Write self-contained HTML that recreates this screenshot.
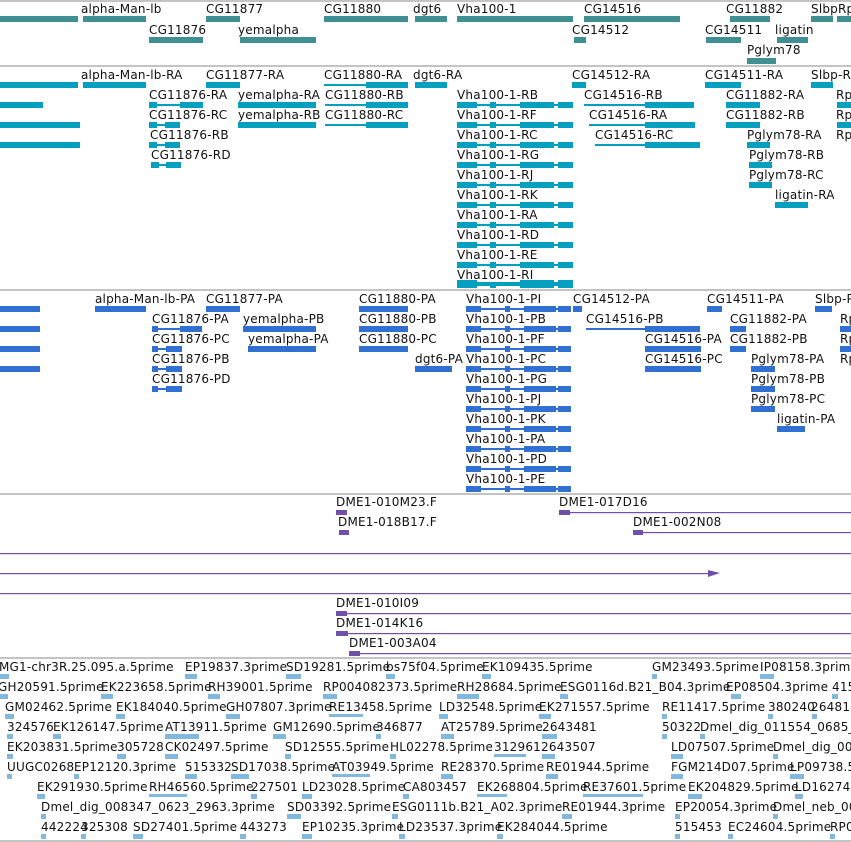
<!DOCTYPE html>
<html><head><meta charset="utf-8"><style>
html,body{margin:0;padding:0;background:#fff;width:851px;height:842px;overflow:hidden}
svg{display:block}
text{font-family:"DejaVu Sans","Liberation Sans",sans-serif;font-size:12px;fill:#111;letter-spacing:0.2px}
</style></head><body>
<svg width="851" height="842" xmlns="http://www.w3.org/2000/svg">
<g stroke="#c4c4c4" stroke-width="2">
<line x1="0" y1="1" x2="851" y2="1"/><line x1="0" y1="66" x2="851" y2="66"/>
<line x1="0" y1="290" x2="851" y2="290"/><line x1="0" y1="494" x2="851" y2="494"/>
<line x1="0" y1="658" x2="851" y2="658"/><line x1="0" y1="841" x2="851" y2="841"/>
</g>
<g fill="#3f8f93">
<rect x="0" y="16" width="78" height="6"/><rect x="83" y="16" width="63" height="6"/>
<rect x="206" y="16" width="34" height="6"/><rect x="324" y="16" width="84" height="6"/>
<rect x="415" y="16" width="32" height="6"/><rect x="457" y="16" width="116" height="6"/>
<rect x="584" y="16" width="96" height="6"/><rect x="730" y="16" width="40" height="6"/>
<rect x="811" y="16" width="22" height="6"/><rect x="837" y="16" width="14" height="6"/>
<rect x="149" y="37" width="54" height="6"/><rect x="240" y="37" width="76" height="6"/>
<rect x="574" y="37" width="12" height="6"/><rect x="706" y="37" width="35" height="6"/>
<rect x="777" y="37" width="31" height="6"/><rect x="747" y="58" width="29" height="6"/>
</g>
<text x="81" y="13">alpha-Man-lb</text><text x="206" y="13">CG11877</text><text x="324" y="13">CG11880</text>
<text x="413" y="13">dgt6</text><text x="457" y="13">Vha100-1</text><text x="584" y="13">CG14516</text>
<text x="726" y="13">CG11882</text><text x="811" y="13">SlbpRp</text>
<text x="149" y="34">CG11876</text><text x="238" y="34">yemalpha</text><text x="572" y="34">CG14512</text>
<text x="705" y="34">CG14511</text><text x="775" y="34">ligatin</text><text x="747" y="54">Pglym78</text>
<g fill="#05a0c0">
<rect x="0" y="82" width="78" height="6"/><rect x="83" y="82" width="63" height="6"/>
<rect x="206" y="82" width="34" height="6"/><rect x="324" y="84" width="84" height="2"/><rect x="366" y="82" width="42" height="6"/>
<rect x="415" y="82" width="32" height="6"/><rect x="572" y="82" width="14" height="6"/>
<rect x="705" y="82" width="36" height="6"/><rect x="811" y="82" width="22" height="6"/>
<rect x="0" y="102" width="43" height="6"/><rect x="149" y="104" width="54" height="2"/><rect x="149" y="102" width="8" height="6"/><rect x="180" y="102" width="23" height="6"/>
<rect x="238" y="102" width="78" height="6"/><rect x="325" y="104" width="83" height="2"/><rect x="366" y="102" width="42" height="6"/>
<rect x="584" y="104" width="110" height="2"/><rect x="645" y="102" width="49" height="6"/>
<rect x="726" y="102" width="34" height="6"/><rect x="837" y="102" width="14" height="6"/>
<rect x="0" y="122" width="80" height="6"/><rect x="149" y="124" width="31" height="2"/><rect x="149" y="122" width="8" height="6"/><rect x="165" y="122" width="15" height="6"/>
<rect x="238" y="122" width="78" height="6"/><rect x="325" y="124" width="83" height="2"/><rect x="366" y="122" width="42" height="6"/>
<rect x="589" y="124" width="106" height="2"/><rect x="645" y="122" width="50" height="6"/>
<rect x="726" y="122" width="34" height="6"/><rect x="837" y="122" width="14" height="6"/>
<rect x="0" y="142" width="80" height="6"/><rect x="149" y="144" width="31" height="2"/><rect x="149" y="142" width="8" height="6"/><rect x="165" y="142" width="15" height="6"/>
<rect x="595" y="144" width="105" height="2"/><rect x="645" y="142" width="55" height="6"/>
<rect x="747" y="142" width="23" height="6"/>
<rect x="151" y="164" width="30" height="2"/><rect x="151" y="162" width="8" height="6"/><rect x="166" y="162" width="15" height="6"/>
<rect x="749" y="162" width="23" height="6"/><rect x="749" y="182" width="23" height="6"/>
<rect x="775" y="202" width="33" height="6"/>
</g>
<g fill="#05a0c0" id="vt">
<rect x="457" y="104" width="116" height="2"/><rect x="457" y="102" width="20" height="6"/><rect x="490" y="102" width="6" height="6"/><rect x="520" y="102" width="34" height="6"/><rect x="558" y="102" width="15" height="6"/>
</g>
<use href="#vt" y="20"/><use href="#vt" y="40"/><use href="#vt" y="60"/><use href="#vt" y="80"/><use href="#vt" y="100"/><use href="#vt" y="120"/><use href="#vt" y="140"/><use href="#vt" y="160"/><use href="#vt" y="180"/>
<g fill="#05a0c0"><rect x="457" y="282" width="116" height="2"/><rect x="457" y="280" width="20" height="5"/><rect x="520" y="280" width="34" height="5"/><rect x="558" y="280" width="15" height="5"/></g>
<text x="81" y="79">alpha-Man-lb-RA</text><text x="206" y="79">CG11877-RA</text><text x="324" y="79">CG11880-RA</text><text x="413" y="79">dgt6-RA</text>
<text x="572" y="79">CG14512-RA</text><text x="705" y="79">CG14511-RA</text><text x="811" y="79">Slbp-RA</text>
<text x="149" y="99">CG11876-RA</text><text x="238" y="99">yemalpha-RA</text><text x="325" y="99">CG11880-RB</text><text x="457" y="99">Vha100-1-RB</text>
<text x="584" y="99">CG14516-RB</text><text x="726" y="99">CG11882-RA</text><text x="836" y="99">Rp</text>
<text x="149" y="119">CG11876-RC</text><text x="238" y="119">yemalpha-RB</text><text x="325" y="119">CG11880-RC</text><text x="457" y="119">Vha100-1-RF</text>
<text x="589" y="119">CG14516-RA</text><text x="726" y="119">CG11882-RB</text><text x="836" y="119">Rp</text>
<text x="150" y="139">CG11876-RB</text><text x="457" y="139">Vha100-1-RC</text><text x="595" y="139">CG14516-RC</text><text x="747" y="139">Pglym78-RA</text><text x="836" y="139">Rp</text>
<text x="151" y="159">CG11876-RD</text><text x="457" y="159">Vha100-1-RG</text><text x="749" y="159">Pglym78-RB</text>
<text x="457" y="179">Vha100-1-RJ</text><text x="749" y="179">Pglym78-RC</text>
<text x="457" y="199">Vha100-1-RK</text><text x="775" y="199">ligatin-RA</text>
<text x="457" y="219">Vha100-1-RA</text><text x="457" y="239">Vha100-1-RD</text><text x="457" y="259">Vha100-1-RE</text><text x="457" y="279">Vha100-1-RI</text>
<g fill="#3070d0">
<rect x="0" y="306" width="40" height="6"/><rect x="95" y="306" width="51" height="6"/>
<rect x="206" y="306" width="34" height="6"/><rect x="359" y="306" width="49" height="6"/>
<rect x="573" y="306" width="9" height="6"/><rect x="707" y="306" width="15" height="6"/><rect x="815" y="306" width="17" height="6"/>
<rect x="0" y="326" width="40" height="6"/><rect x="152" y="328" width="50" height="2"/><rect x="152" y="326" width="6" height="6"/><rect x="180" y="326" width="22" height="6"/>
<rect x="243" y="326" width="73" height="6"/><rect x="359" y="326" width="49" height="6"/>
<rect x="586" y="328" width="114" height="2"/><rect x="645" y="326" width="55" height="6"/>
<rect x="730" y="326" width="16" height="6"/><rect x="840" y="326" width="11" height="6"/>
<rect x="0" y="346" width="40" height="6"/><rect x="152" y="348" width="30" height="2"/><rect x="152" y="346" width="6" height="6"/><rect x="166" y="346" width="16" height="6"/>
<rect x="248" y="346" width="68" height="6"/><rect x="359" y="346" width="49" height="6"/>
<rect x="645" y="346" width="56" height="6"/><rect x="730" y="346" width="16" height="6"/><rect x="840" y="346" width="11" height="6"/>
<rect x="0" y="366" width="40" height="6"/><rect x="152" y="368" width="30" height="2"/><rect x="152" y="366" width="6" height="6"/><rect x="166" y="366" width="16" height="6"/>
<rect x="415" y="366" width="37" height="6"/><rect x="645" y="366" width="56" height="6"/><rect x="751" y="366" width="24" height="6"/>
<rect x="152" y="388" width="30" height="2"/><rect x="152" y="386" width="6" height="6"/><rect x="166" y="386" width="16" height="6"/>
<rect x="751" y="386" width="24" height="6"/><rect x="751" y="406" width="24" height="6"/><rect x="777" y="426" width="28" height="6"/>
</g>
<g fill="#3070d0" id="vp">
<rect x="466" y="308" width="105" height="2"/><rect x="466" y="306" width="15" height="6"/><rect x="505" y="306" width="5" height="6"/><rect x="524" y="306" width="32" height="6"/><rect x="558" y="306" width="13" height="6"/>
</g>
<use href="#vp" y="20"/><use href="#vp" y="40"/><use href="#vp" y="60"/><use href="#vp" y="80"/><use href="#vp" y="100"/><use href="#vp" y="120"/><use href="#vp" y="140"/><use href="#vp" y="160"/><use href="#vp" y="180"/>
<text x="95" y="303">alpha-Man-lb-PA</text><text x="206" y="303">CG11877-PA</text><text x="359" y="303">CG11880-PA</text><text x="466" y="303">Vha100-1-PI</text>
<text x="573" y="303">CG14512-PA</text><text x="707" y="303">CG14511-PA</text><text x="815" y="303">Slbp-PA</text>
<text x="152" y="323">CG11876-PA</text><text x="243" y="323">yemalpha-PB</text><text x="359" y="323">CG11880-PB</text><text x="466" y="323">Vha100-1-PB</text>
<text x="586" y="323">CG14516-PB</text><text x="730" y="323">CG11882-PA</text><text x="840" y="323">Rp</text>
<text x="152" y="343">CG11876-PC</text><text x="248" y="343">yemalpha-PA</text><text x="359" y="343">CG11880-PC</text><text x="466" y="343">Vha100-1-PF</text>
<text x="645" y="343">CG14516-PA</text><text x="730" y="343">CG11882-PB</text><text x="840" y="343">Rp</text>
<text x="152" y="363">CG11876-PB</text><text x="415" y="363">dgt6-PA</text><text x="466" y="363">Vha100-1-PC</text><text x="645" y="363">CG14516-PC</text><text x="751" y="363">Pglym78-PA</text><text x="840" y="363">Rp</text>
<text x="152" y="383">CG11876-PD</text><text x="466" y="383">Vha100-1-PG</text><text x="751" y="383">Pglym78-PB</text>
<text x="466" y="403">Vha100-1-PJ</text><text x="751" y="403">Pglym78-PC</text>
<text x="466" y="423">Vha100-1-PK</text><text x="777" y="423">ligatin-PA</text>
<text x="466" y="443">Vha100-1-PA</text><text x="466" y="463">Vha100-1-PD</text><text x="466" y="483">Vha100-1-PE</text>
<g fill="#7050a8" stroke="none">
<rect x="336" y="510" width="11" height="5"/><rect x="339" y="530" width="10" height="5"/>
<rect x="559" y="510" width="11" height="5"/><rect x="559" y="512" width="292" height="1.2"/>
<rect x="633" y="530" width="10" height="5"/><rect x="633" y="532" width="218" height="1.2"/>
<rect x="0" y="553" width="851" height="1.2"/><rect x="0" y="573" width="715" height="1.2"/><polygon points="708,570 720,573 708,577"/>
<rect x="0" y="593" width="851" height="1.2"/>
<rect x="336" y="611" width="11" height="5"/><rect x="336" y="613" width="515" height="1.2"/>
<rect x="336" y="631" width="12" height="5"/><rect x="336" y="633" width="515" height="1.2"/>
<rect x="349" y="651" width="11" height="5"/><rect x="349" y="653" width="502" height="1.2"/>
</g>
<text x="336" y="506">DME1-010M23.F</text><text x="559" y="506">DME1-017D16</text>
<text x="338" y="526">DME1-018B17.F</text><text x="633" y="526">DME1-002N08</text>
<text x="336" y="607">DME1-010I09</text><text x="336" y="627">DME1-014K16</text><text x="349" y="647">DME1-003A04</text>
<g fill="#80b8e0">
<rect x="0" y="674" width="9" height="5"/><rect x="185" y="674" width="12" height="5"/><rect x="286" y="674" width="15" height="5"/><rect x="386" y="674" width="9" height="5"/><rect x="482" y="674" width="9" height="5"/><rect x="652" y="674" width="5" height="5"/><rect x="760" y="674" width="14" height="5"/>
<rect x="0" y="694" width="8" height="5"/><rect x="101" y="694" width="12" height="5"/><rect x="208" y="694" width="12" height="5"/><rect x="323" y="694" width="14" height="5"/><rect x="457" y="694" width="22" height="5"/><rect x="560" y="694" width="8" height="5"/><rect x="731" y="694" width="10" height="5"/><rect x="832" y="694" width="6" height="5"/>
<rect x="5" y="714" width="9" height="5"/><rect x="116" y="714" width="9" height="5"/><rect x="226" y="714" width="14" height="5"/><rect x="329" y="714" width="34" height="3"/><rect x="439" y="714" width="9" height="5"/><rect x="539" y="714" width="12" height="5"/><rect x="662" y="714" width="5" height="5"/><rect x="768" y="714" width="5" height="5"/><rect x="812" y="714" width="5" height="5"/>
<rect x="7" y="734" width="6" height="5"/><rect x="53" y="734" width="8" height="5"/><rect x="165" y="734" width="34" height="5"/><rect x="273" y="734" width="13" height="5"/><rect x="376" y="734" width="5" height="5"/><rect x="441" y="734" width="13" height="5"/><rect x="542" y="734" width="15" height="5"/><rect x="662" y="734" width="5" height="5"/><rect x="700" y="734" width="5" height="5"/>
<rect x="7" y="754" width="6" height="5"/><rect x="117" y="754" width="9" height="5"/><rect x="165" y="754" width="13" height="5"/><rect x="285" y="754" width="6" height="5"/><rect x="390" y="754" width="6" height="5"/><rect x="494" y="754" width="32" height="3"/><rect x="542" y="754" width="13" height="5"/><rect x="671" y="754" width="12" height="5"/><rect x="773" y="754" width="5" height="5"/>
<rect x="7" y="774" width="5" height="5"/><rect x="74" y="774" width="5" height="5"/><rect x="185" y="774" width="12" height="5"/><rect x="231" y="774" width="18" height="5"/><rect x="332" y="774" width="38" height="3"/><rect x="441" y="774" width="12" height="5"/><rect x="546" y="774" width="12" height="5"/><rect x="671" y="774" width="12" height="5"/><rect x="790" y="774" width="14" height="5"/>
<rect x="37" y="794" width="8" height="5"/><rect x="149" y="794" width="38" height="3"/><rect x="251" y="794" width="6" height="5"/><rect x="302" y="794" width="10" height="5"/><rect x="403" y="794" width="6" height="5"/><rect x="477" y="794" width="30" height="3"/><rect x="583" y="794" width="60" height="3"/><rect x="688" y="794" width="14" height="5"/><rect x="795" y="794" width="8" height="5"/>
<rect x="41" y="814" width="5" height="5"/><rect x="287" y="814" width="14" height="5"/><rect x="392" y="814" width="6" height="5"/><rect x="562" y="814" width="10" height="5"/><rect x="675" y="814" width="5" height="5"/><rect x="773" y="814" width="5" height="5"/>
<rect x="41" y="834" width="5" height="5"/><rect x="81" y="834" width="5" height="5"/><rect x="133" y="834" width="10" height="5"/><rect x="240" y="834" width="6" height="5"/><rect x="302" y="834" width="10" height="5"/><rect x="399" y="834" width="6" height="5"/><rect x="497" y="834" width="6" height="5"/><rect x="675" y="834" width="5" height="5"/><rect x="728" y="834" width="5" height="5"/><rect x="830" y="834" width="5" height="5"/>
</g>
<text x="-1" y="671">MG1-chr3R.25.095.a.5prime</text><text x="185" y="671">EP19837.3prime</text><text x="286" y="671">SD19281.5prime</text><text x="386" y="671">bs75f04.5prime</text><text x="482" y="671">EK109435.5prime</text><text x="652" y="671">GM23493.5prime</text><text x="760" y="671">IP08158.3prime</text>
<text x="-2" y="691">GH20591.5prime</text><text x="101" y="691">EK223658.5prime</text><text x="208" y="691">RH39001.5prime</text><text x="323" y="691">RP004082373.5prime</text><text x="457" y="691">RH28684.5prime</text><text x="560" y="691">ESG0116d.B21_B04.3prime</text><text x="726" y="691">EP08504.3prime</text><text x="832" y="691">415</text>
<text x="5" y="711">GM02462.5prime</text><text x="116" y="711">EK184040.5prime</text><text x="226" y="711">GH07807.3prime</text><text x="329" y="711">RE13458.5prime</text><text x="439" y="711">LD32548.5prime</text><text x="539" y="711">EK271557.5prime</text><text x="662" y="711">RE11417.5prime</text><text x="768" y="711">380240</text><text x="811" y="711">26481</text>
<text x="7" y="731">324576</text><text x="53" y="731">EK126147.5prime</text><text x="165" y="731">AT13911.5prime</text><text x="273" y="731">GM12690.5prime</text><text x="376" y="731">346877</text><text x="441" y="731">AT25789.5prime</text><text x="542" y="731">2643481</text><text x="662" y="731">50322</text><text x="700" y="731">Dmel_dig_011554_0685_</text>
<text x="7" y="751">EK203831.5prime</text><text x="117" y="751">305728</text><text x="165" y="751">CK02497.5prime</text><text x="285" y="751">SD12555.5prime</text><text x="390" y="751">HL02278.5prime</text><text x="494" y="751">312961</text><text x="541" y="751">2643507</text><text x="671" y="751">LD07507.5prime</text><text x="773" y="751">Dmel_dig_003</text>
<text x="7" y="771">UUGC0268</text><text x="74" y="771">EP12120.3prime</text><text x="185" y="771">515332</text><text x="231" y="771">SD17038.5prime</text><text x="332" y="771">AT03949.5prime</text><text x="441" y="771">RE28370.5prime</text><text x="546" y="771">RE01944.5prime</text><text x="671" y="771">FGM214D07.5prime</text><text x="790" y="771">LP09738.5</text>
<text x="37" y="791">EK291930.5prime</text><text x="149" y="791">RH46560.5prime</text><text x="251" y="791">227501</text><text x="302" y="791">LD23028.5prime</text><text x="403" y="791">CA803457</text><text x="477" y="791">EK268804.5prime</text><text x="583" y="791">RE37601.5prime</text><text x="688" y="791">EK204829.5prime</text><text x="795" y="791">LD16274</text>
<text x="41" y="811">Dmel_dig_008347_0623_2963.3prime</text><text x="287" y="811">SD03392.5prime</text><text x="392" y="811">ESG0111b.B21_A02.3prime</text><text x="562" y="811">RE01944.3prime</text><text x="675" y="811">EP20054.3prime</text><text x="773" y="811">Dmel_neb_00</text>
<text x="41" y="831">442224</text><text x="81" y="831">325308</text><text x="133" y="831">SD27401.5prime</text><text x="240" y="831">443273</text><text x="302" y="831">EP10235.3prime</text><text x="399" y="831">LD23537.3prime</text><text x="497" y="831">EK284044.5prime</text><text x="675" y="831">515453</text><text x="728" y="831">EC24604.5prime</text><text x="830" y="831">RP0</text>
</svg>
</body></html>
